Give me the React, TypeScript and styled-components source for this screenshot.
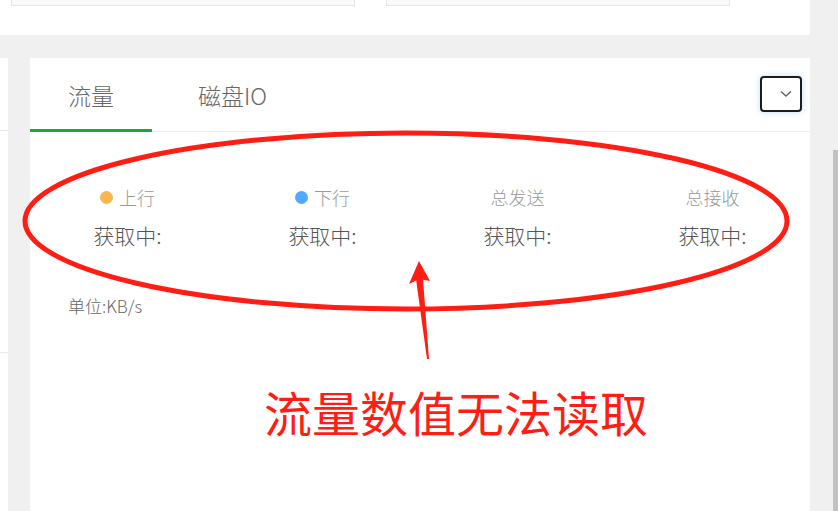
import React from "react";
import styled, { createGlobalStyle } from "styled-components";

const GlobalStyle = createGlobalStyle`
  html, body {
    margin: 0;
    padding: 0;
    background: #f0f0f0;
    font-family: "Liberation Sans", "Noto Sans CJK SC", sans-serif;
    overflow: hidden;
  }
`;

const Page = styled.div`
  position: relative;
  width: 838px;
  height: 511px;
  overflow: hidden;
`;

const TopPanel = styled.div`
  width: 810px;
  height: 35px;
  background: #fff;
  display: flex;
  gap: 31px;
  padding-left: 11px;
  box-sizing: border-box;
`;

const TopBox = styled.div`
  width: 342px;
  height: 5px;
  background: #fafafa;
  border: 1px solid #e6e6e6;
  border-top: none;
`;

const MainRow = styled.div`
  display: flex;
  gap: 22px;
  margin-top: 23px;
`;

const SidePanel = styled.div`
  width: 8px;
  height: 460px;
  background: #fff;
  display: flex;
  flex-direction: column;
`;

const SideLine = styled.div<{ top: number }>`
  height: 1px;
  background: #e8e8f2;
  margin-top: ${(p) => p.top}px;
`;

const Card = styled.div`
  width: 780px;
  height: 460px;
  background: #fff;
`;

const TabBar = styled.div`
  height: 74px;
  border-bottom: 1px solid #eee;
  display: flex;
  align-items: stretch;
  gap: 8px;
  position: relative;
  box-sizing: border-box;
`;

const Tab = styled.div<{ active?: boolean }>`
  padding: 3px 38px 0;
  display: flex;
  align-items: center;
  font-family: "Noto Sans CJK SC", "Liberation Sans", sans-serif;
  font-weight: 300;
  font-size: 23px;
  color: #666;
  border-bottom: 3px solid ${(p) => (p.active ? "#20a53a" : "transparent")};
  margin-bottom: -1px;
`;

const Select = styled.div`
  position: absolute;
  right: 8px;
  top: 18px;
  width: 42px;
  height: 36px;
  box-sizing: border-box;
  border: 2px solid #1c1c1c;
  border-radius: 4px;
  box-shadow: 0 0 6px rgba(64, 158, 255, 0.35);
  display: flex;
  align-items: center;
  justify-content: flex-end;
  padding-right: 8px;
`;

const Stats = styled.div`
  display: grid;
  grid-template-columns: repeat(4, 1fr);
  padding-top: 54px;
`;

const Stat = styled.div`
  display: flex;
  flex-direction: column;
  align-items: center;
`;

const Label = styled.div`
  display: flex;
  align-items: center;
  gap: 6px;
  font-family: "Noto Sans CJK SC", sans-serif;
  font-weight: 300;
  font-size: 18px;
  line-height: 22px;
  color: #999;
`;

const Dot = styled.span<{ color: string }>`
  width: 13px;
  height: 13px;
  border-radius: 50%;
  background: ${(p) => p.color};
`;

const Value = styled.div`
  margin-top: 13px;
  font-family: "Noto Sans CJK SC", sans-serif;
  font-weight: 300;
  font-size: 21px;
  line-height: 28px;
  color: #555;
`;

const Unit = styled.div`
  margin: 46px 0 0 38px;
  font-family: "Noto Sans CJK SC", sans-serif;
  font-weight: 300;
  font-size: 17px;
  line-height: 22px;
  color: #666;
`;

const Note = styled.div`
  margin: 64px 0 0 234px;
  font-family: "Noto Sans CJK SC", sans-serif;
  font-size: 48px;
  line-height: 60px;
  color: #ff1d14;
  white-space: nowrap;
`;

const Scrollbar = styled.div`
  position: absolute;
  right: 0;
  top: 150px;
  width: 5px;
  height: 361px;
  background: #c1c1c1;
`;

const Annotation = styled.svg`
  position: absolute;
  inset: 0;
  pointer-events: none;
`;

const stats = [
  { label: "上行", dot: "#f7b851" },
  { label: "下行", dot: "#52a9ff" },
  { label: "总发送" },
  { label: "总接收" },
];

export default function App() {
  return (
    <Page>
      <GlobalStyle />
      <TopPanel>
        <TopBox />
        <TopBox />
      </TopPanel>
      <MainRow>
        <SidePanel>
          <SideLine top={72} />
          <SideLine top={221} />
        </SidePanel>
        <Card>
          <TabBar>
            <Tab active>流量</Tab>
            <Tab>磁盘IO</Tab>
            <Select>
              <svg width="12" height="8" viewBox="0 0 12 8">
                <path d="M1 1.5 L6 6 L11 1.5" fill="none" stroke="#666" strokeWidth="1.6" />
              </svg>
            </Select>
          </TabBar>
          <Stats>
            {stats.map((s) => (
              <Stat key={s.label}>
                <Label>
                  {s.dot && <Dot color={s.dot} />}
                  {s.label}
                </Label>
                <Value>获取中:</Value>
              </Stat>
            ))}
          </Stats>
          <Unit>单位:KB/s</Unit>
          <Note>流量数值无法读取</Note>
        </Card>
      </MainRow>
      <Scrollbar />
      <Annotation width="838" height="511" viewBox="0 0 838 511">
        <ellipse cx="406" cy="221" rx="381" ry="88" fill="none" stroke="#ff1d14" strokeWidth="5" />
        <polygon points="419,261 409,284 419,279 430,281" fill="#ff1d14" />
        <polygon points="416,279 423,279 429,359 427,359" fill="#ff1d14" />
      </Annotation>
    </Page>
  );
}
